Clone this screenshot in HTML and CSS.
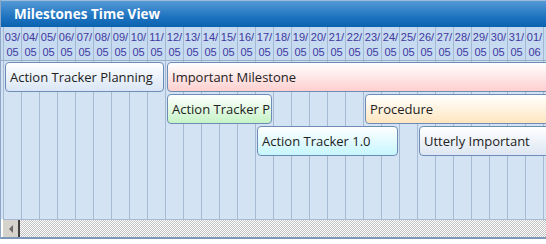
FILE: index.html
```html
<!DOCTYPE html>
<html lang="en">
<head>
<meta charset="UTF-8">
<meta name="viewport" content="width=device-width, initial-scale=1.0">
<title>Milestones Time View</title>
<link rel="stylesheet" href="styles.css">
</head>
<body>
<div class="timeview">
  <div class="title">Milestones Time View</div>
  <div class="header">
    <div class="day">03/<br>05</div>
    <div class="day">04/<br>05</div>
    <div class="day">05/<br>05</div>
    <div class="day">06/<br>05</div>
    <div class="day">07/<br>05</div>
    <div class="day">08/<br>05</div>
    <div class="day">09/<br>05</div>
    <div class="day">10/<br>05</div>
    <div class="day">11/<br>05</div>
    <div class="day">12/<br>05</div>
    <div class="day">13/<br>05</div>
    <div class="day">14/<br>05</div>
    <div class="day">15/<br>05</div>
    <div class="day">16/<br>05</div>
    <div class="day">17/<br>05</div>
    <div class="day">18/<br>05</div>
    <div class="day">19/<br>05</div>
    <div class="day">20/<br>05</div>
    <div class="day">21/<br>05</div>
    <div class="day">22/<br>05</div>
    <div class="day">23/<br>05</div>
    <div class="day">24/<br>05</div>
    <div class="day">25/<br>05</div>
    <div class="day">26/<br>05</div>
    <div class="day">27/<br>05</div>
    <div class="day">28/<br>05</div>
    <div class="day">29/<br>05</div>
    <div class="day">30/<br>05</div>
    <div class="day">31/<br>05</div>
    <div class="day">01/<br>06</div>
    <div class="day"></div>
  </div>
  <div class="lanes">
    <div class="bar blue" style="grid-column: 1 / 10; grid-row: 1;">Action Tracker Planning</div>
    <div class="bar pink" style="grid-column: 10 / 33; grid-row: 1;">Important Milestone</div>
    <div class="bar green" style="grid-column: 10 / 16; grid-row: 2;">Action Tracker P</div>
    <div class="bar orange" style="grid-column: 21 / 33; grid-row: 2;">Procedure</div>
    <div class="bar cyan" style="grid-column: 15 / 23; grid-row: 3;">Action Tracker 1.0</div>
    <div class="bar grey" style="grid-column: 24 / 33; grid-row: 3;">Utterly Important</div>
  </div>
  <div class="scrollbar">
    <div class="arrow"><span class="tri"></span></div>
    <div class="track"></div>
  </div>
</div>
</body>
</html>
```
FILE: styles.css
```css
/* time view */
body {
  margin: 0;
  background: #fff;
  font-family: "Open Sans", "DejaVu Sans", sans-serif;
}
.timeview {
  width: 600px;
  border-left: 1px solid #8ea6c6;
  border-bottom: 2px solid #7d98bb;
  overflow: hidden;
}
.title {
  height: 27px;
  box-sizing: border-box;
  padding: 5px 0 0 13px;
  border-top: 1px solid #9dbcdc;
  background: linear-gradient(#5499d6, #1f74c0 60%, #0a62ae);
  color: #fff;
  font-weight: bold;
  font-size: 13.5px;
  line-height: 17px;
}
.header {
  display: flex;
  padding-left: 2px;
  height: 34px;
  box-sizing: border-box;
  background: #c6daf0;
  border-bottom: 1px solid #98aec8;
}
.day {
  flex: 0 0 18px;
  box-sizing: border-box;
  border-left: 1px solid #a3b8d2;
  color: #40389f;
  font-family: "Liberation Sans", Arial, sans-serif;
  font-size: 11px;
  line-height: 15px;
  text-align: center;
  padding-top: 3px;
}
.lanes {
  display: grid;
  grid-template-columns: repeat(32, 18px);
  grid-template-rows: repeat(3, 30px);
  row-gap: 2px;
  height: 158px;
  box-sizing: border-box;
  padding: 1px 0 0 2px;
  align-content: start;
  background: repeating-linear-gradient(to right, #a6bad3 0 1px, #d3e3f3 1px 18px);
  background-position: 2px 0;
  background-color: #d3e3f3;
}
.bar {
  margin: 0 1px 0 2px;
  border: 1px solid #6d8db7;
  border-radius: 4px;
  padding-left: 4px;
  font-size: 13px;
  line-height: 28px;
  color: #222;
  white-space: nowrap;
  overflow: hidden;
}
.blue { background: linear-gradient(#fdfeff, #dae6f6); }
.pink { background: linear-gradient(#fff, #ffcfcf); }
.green { background: linear-gradient(#fff, #c6f3c6); }
.orange { background: linear-gradient(#fff, #ffe6c0); }
.cyan { background: linear-gradient(#fff, #c6f6ff); }
.grey { background: linear-gradient(#fff, #dde6f2); }
.pink, .orange, .grey { margin-right: 0; }
.scrollbar {
  display: flex;
  height: 17px;
  margin-left: 2px;
  border-top: 1px solid #a6bad3;
}
.arrow {
  width: 15px;
  background: #d6d3cc;
  border-right: 2px solid #404040;
  display: flex;
  align-items: center;
  justify-content: center;
}
.tri {
  width: 0;
  height: 0;
  border-top: 4px solid transparent;
  border-bottom: 4px solid transparent;
  border-right: 4px solid #6a6a6a;
}
.track {
  flex: 1;
  background: repeating-conic-gradient(#c4c4c4 0 25%, #fff 0 50%) 0 0 / 2px 2px;
}
```
